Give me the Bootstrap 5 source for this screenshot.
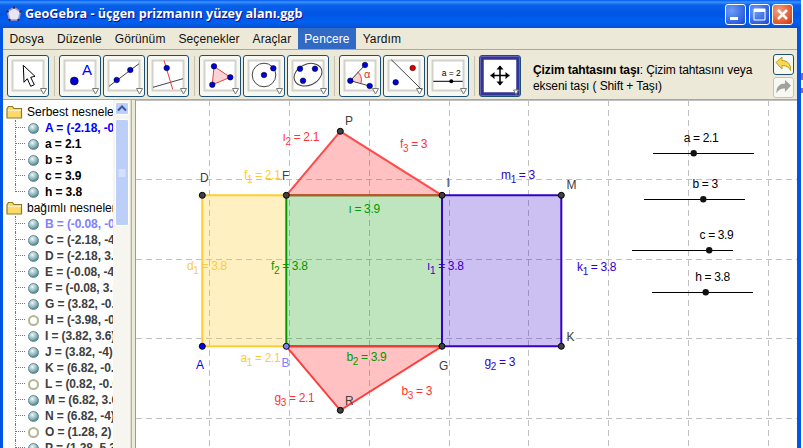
<!DOCTYPE html>
<html lang="tr">
<head>
    <meta charset="UTF-8">
    <meta name="viewport" content="width=device-width, initial-scale=1.0">
    <title>GeoGebra</title>
    <link href="https://cdn.jsdelivr.net/npm/bootstrap@5.3.0/dist/css/bootstrap.min.css" rel="stylesheet">
    <style>
        html, body { margin: 0; height: 448px; overflow: hidden; background: #fff; }
        body { font: 12px/16px "Liberation Sans", Arial, sans-serif; color: #000; }
        .gg-window { width: 803px; height: 448px; }
        .gg-frame { width: 801px; background: #ece9d8; border-left: 3px solid #0055e5; border-right: 4px solid #0055e5; }
        .gg-gutter { width: 2px; background: linear-gradient(#fff 73px, #8a5fc0 73px, #8a5fc0 80px, #fff 80px, #fff 88px, #8a5fc0 88px, #8a5fc0 93px, #fff 93px); }
        .gg-defs { position: absolute; }

        .gg-title { height: 28px; margin: 0 -4px 0 -3px; padding: 0 6px; color: #fff; font: bold 12.6px/1 "Open Sans", sans-serif; text-shadow: 1px 1px 0 #0f1089; background: linear-gradient(#0058ee 0, #3a93ff 2px, #0a62e8 5px, #0055e5 14px, #0060f0 22px, #0a50d0 28px); }
        .gg-title-text { margin-left: 3px; }
        .win-group { gap: 2.5px; margin-right: 2px; }
        .win-btn { width: 21px; height: 21px; border: 1px solid #fff; border-radius: 3px; background: radial-gradient(circle at 30% 30%, #6f9cf5, #2a5ee0 75%, #1c46c4); padding: 0; }
        .win-close { background: radial-gradient(circle at 30% 30%, #f0a080, #e0542c 70%, #c23a14); }

        .gg-menu { height: 22px; border-bottom: 1px solid #aca899; letter-spacing: .1px; }
        .gg-menu span { padding: 0 6.5px; line-height: 22px; height: 21px; color: #111; }
        .gg-menu span.is-open { background: #316ac5; color: #fff; padding: 0 6px; margin: 0 .5px; }

        .gg-tools { height: 50px; padding: 5px 0 0 4px; border-bottom: 1px solid #aca899; }
        .tool-btn { width: 42px; height: 42px; padding: 0; border: 1px solid #1c4f74; border-radius: 3px; background: #f8f8f3; flex: none; margin-right: 2px; }
        .tool-btn svg { display: block; }
        .tool-sep { width: 1px; height: 40px; margin: 1px 4px 0 3px; background: #c9c5b2; flex: none; }
        .tool-help { width: 240px; margin-left: 10px; padding-top: 7px; flex: none; letter-spacing: -.1px; }
        .hist-stack { gap: 2px; margin-top: -1px; }
        .hist-btn { width: 21px; height: 21px; padding: 0; border: 1px solid #1c4f74; border-radius: 3px; background: #f8f8f3; }
        .hist-off { border-color: #c6c5b5; }

        .gg-main { height: 348px; }
        .gg-tree { width: 110px; background: #fff; overflow: hidden; padding-top: 4px; white-space: nowrap; flex: none; }
        .tree-head, .tree-row { height: 16px; }
        .tree-head svg { margin: 0 4px 0 3px; flex: none; }
        .tree-group { margin: 0 0 0 12px; padding: 0; list-style: none; }
        .tree-row { border-left: 1px dotted #777; font-weight: bold; color: #404040; letter-spacing: -.1px; }
        .tree-row.is-last { border-left-color: transparent; }
        .tree-tick { width: 10px; height: 8px; margin-left: -1px; border-bottom: 1px dotted #777; align-self: flex-start; flex: none; }
        .is-last .tree-tick { border-left: 1px dotted #777; }
        .tree-ball { width: 11px; height: 11px; margin: 0 6px 0 3px; border-radius: 50%; flex: none; background: radial-gradient(circle at 38% 30%, #f0f6f6, #8fb8bc 50%, #3f7488 85%); border: 1px solid #5d8794; }
        .tree-ball.is-hollow { background: #fff; border: 2px solid #b4b494; }
        .tree-free { color: #000; }
        .tree-blue { color: #0000ff; }
        .tree-pale { color: #8080ff; }

        .gg-scroll { width: 18px; flex: none; background: #f6f5ef; padding: 2px 1px 0 2px; border-right: 1px solid #e0ddcc; }
        .scroll-up { height: 13px; border: 1px solid #fff; border-radius: 2px; background: #bccff9; }
        .scroll-thumb { height: 107px; margin-top: 4px; border: 1px solid #fff; border-radius: 2px; background: #bccff9; }
        .gg-split { width: 5px; flex: none; background: #ece9d8; border-right: 1px solid #9d9b8e; border-left: 1px solid #b4b2a4; }
        .gg-canvas { display: block; width: 661px; height: 348px; background: #fff; flex: none; }
        .gg-canvas text { font: 12px "Liberation Sans", Arial, sans-serif; letter-spacing: -.35px; }
        .gg-canvas .sb { font-size: 10px; }
        .grid-line { stroke: #c0c0c0; stroke-width: 1; stroke-dasharray: 6 4; }
        .pt { stroke: #000; stroke-width: 1; fill: #404040; }
        .pt-blue { fill: #0000ff; }
        .pt-pale { fill: #8080ff; }
    </style>
</head>
<body>
    <svg width="0" height="0" class="gg-defs">
        <defs>
            <g id="frame"><rect x="4.5" y="4.5" width="31" height="30" fill="#fff" stroke="#d2d2ca" stroke-width="2"/></g>
            <g id="drop"><path d="M32.5 32.5h6l-3 5.5z" fill="#fff" stroke="#777"/></g>
        </defs>
    </svg>

    <div class="gg-window d-flex">
        <div class="gg-frame d-flex flex-column">
            <div class="gg-title d-flex align-items-center">
                <svg width="16" height="16" viewBox="0 0 16 16"><path d="M8 1.5 14.5 5.5 12.5 14 3.5 14 1.500 5.5z" fill="#e6e6f6" stroke="#9a9ac4" stroke-width="1.5"/><g fill="#2a2a70"><circle cx="8" cy="1.5" r="1.3"/><circle cx="14.5" cy="5.5" r="1.3"/><circle cx="12.5" cy="14" r="1.3"/><circle cx="3.5" cy="14" r="1.3"/><circle cx="1.5" cy="5.5" r="1.3"/></g></svg>
                <span class="gg-title-text">GeoGebra - üçgen prizmanın yüzey alanı.ggb</span>
                <div class="win-group d-flex ms-auto">
                    <button class="win-btn d-flex"><svg width="19" height="19"><rect x="4" y="12" width="8" height="3" fill="#fff"/></svg></button>
                    <button class="win-btn d-flex"><svg width="19" height="19"><path d="M4 4h11v11H4z" fill="none" stroke="#fff"/><rect x="4" y="4" width="11" height="3" fill="#fff"/></svg></button>
                    <button class="win-btn win-close d-flex"><svg width="19" height="19"><path d="M5 5l9 9M14 5l-9 9" stroke="#fff" stroke-width="2.5"/></svg></button>
                </div>
            </div>

            <div class="gg-menu d-flex">
                <span>Dosya</span><span>Düzenle</span><span>Görünüm</span><span>Seçenekler</span><span>Araçlar</span><span class="is-open">Pencere</span><span>Yardım</span>
            </div>

            <div class="gg-tools d-flex">
                <button class="tool-btn"><svg width="40" height="40"><use href="#frame"/><use href="#drop"/><path d="M15.3 9.3 16 26.3 19.3 22.7 22.7 30.3 26.3 28.7 22.7 21.3 27 20.3z" fill="#fff" stroke="#000"/></svg></button>
                <div class="tool-sep"></div>
                <button class="tool-btn"><svg width="40" height="40"><use href="#frame"/><use href="#drop"/><circle cx="14.3" cy="25" r="4" fill="#0000d8" stroke="#000" stroke-width=".5"/><text x="22" y="19" fill="#0000ff" font-size="15" font-family="Liberation Sans">A</text></svg></button>
                <button class="tool-btn"><svg width="40" height="40"><use href="#frame"/><use href="#drop"/><path d="M5 30.3 35 7.7" stroke="#444" fill="none"/><circle cx="12.7" cy="24" r="2.8" fill="#0000d8" stroke="#000" stroke-width=".5"/><circle cx="26.3" cy="14" r="2.8" fill="#0000d8" stroke="#000" stroke-width=".5"/></svg></button>
                <button class="tool-btn"><svg width="40" height="40"><use href="#frame"/><use href="#drop"/><path d="M5 31.3 35 22.7" stroke="#444" fill="none"/><path d="M16 4.3 24.7 33.3" stroke="#f03c3c" fill="none"/><circle cx="18.7" cy="12" r="2.8" fill="#0000d8" stroke="#000" stroke-width=".5"/></svg></button>
                <div class="tool-sep"></div>
                <button class="tool-btn"><svg width="40" height="40"><use href="#frame"/><use href="#drop"/><path d="M14 10.3 30.3 21.3 12.3 28.7z" fill="#f8d4d4" stroke="#e84040"/><g fill="#0000d8" stroke="#000" stroke-width=".5"><circle cx="14" cy="10.3" r="2.8"/><circle cx="30.3" cy="21.3" r="2.8"/><circle cx="12.3" cy="28.7" r="2.8"/></g></svg></button>
                <button class="tool-btn"><svg width="40" height="40"><use href="#frame"/><use href="#drop"/><circle cx="20" cy="19" r="11.8" fill="none" stroke="#444"/><g fill="#0000d8" stroke="#000" stroke-width=".5"><circle cx="20" cy="19" r="2.8"/><circle cx="29.3" cy="12.3" r="2.8"/></g></svg></button>
                <button class="tool-btn"><svg width="40" height="40"><use href="#frame"/><use href="#drop"/><ellipse cx="20" cy="18.7" rx="14.5" ry="10.5" transform="rotate(-25 20 18.7)" fill="none" stroke="#444"/><g fill="#0000d8" stroke="#000" stroke-width=".5"><circle cx="12" cy="12.7" r="2.8"/><circle cx="27" cy="12.7" r="2.8"/><circle cx="15" cy="24.7" r="2.8"/></g></svg></button>
                <div class="tool-sep"></div>
                <button class="tool-btn"><svg width="40" height="40"><use href="#frame"/><use href="#drop"/><path d="M10.3 24.7 17.5 15.8A11 11 0 0 1 21 27z" fill="#f8d4d4"/><path d="M17.5 15.8A11 11 0 0 1 21 27" fill="none" stroke="#e84040"/><path d="M25 9 10.3 24.7 29.7 30" fill="none" stroke="#444"/><g fill="#0000d8" stroke="#000" stroke-width=".5"><circle cx="25" cy="9" r="2.8"/><circle cx="10.3" cy="24.7" r="2.8"/><circle cx="29.7" cy="30" r="2.8"/></g><text x="24" y="22" fill="#e03030" font-size="11" font-family="Liberation Sans">α</text></svg></button>
                <button class="tool-btn"><svg width="40" height="40"><use href="#frame"/><use href="#drop"/><path d="M7.3 3.7 37.7 33.7" stroke="#444" fill="none"/><circle cx="28.7" cy="12" r="2.8" fill="#e00000" stroke="#000" stroke-width=".5"/><circle cx="11.7" cy="26.3" r="2.8" fill="#0000d8" stroke="#000" stroke-width=".5"/></svg></button>
                <button class="tool-btn"><svg width="40" height="40"><use href="#frame"/><use href="#drop"/><text x="13.7" y="19.5" font-size="8.5" font-family="Liberation Sans">a = 2</text><path d="M5.3 25.3H34.7" stroke="#000"/><circle cx="23.3" cy="25.3" r="2" fill="#000"/></svg></button>
                <div class="tool-sep"></div>
                <button class="tool-btn"><svg width="40" height="40"><rect x="2" y="2" width="36" height="36" fill="#fff" stroke="#33339a" stroke-width="3.5"/><path d="M33.5 34h5l-2.5 4.5z" fill="#fff" stroke="#777"/><path d="M20 10v19M10.5 19.5h19" stroke="#000" stroke-width="1.5"/><path d="M20 9.5l-3.5 4h7zM20 29.5l-3.5-4h7zM10.5 19.5l4-3.500v7zM29.500 19.500l-4-3.500v7z" fill="#000"/></svg></button>
                <div class="tool-help"><b>Çizim tahtasını taşı</b>: Çizim tahtasını veya<br>ekseni taşı ( Shift + Taşı)</div>
                <div class="hist-stack d-flex flex-column">
                    <button class="hist-btn d-flex"><svg width="19" height="19"><path d="M2 7.5 8 2v3.5c5 0 9 3 8.5 10-1.5-3.5-4-5-8.5-5V14z" fill="#f4d850" stroke="#c0a020"/></svg></button>
                    <button class="hist-btn hist-off d-flex"><svg width="19" height="19"><path d="M17 7.5 11 2v3.5c-5 0-9 3-8.5 10 1.5-3.5 4-5 8.5-5V14z" fill="#a0a0a0"/></svg></button>
                </div>
            </div>

            <div class="gg-main d-flex">
                <div class="gg-tree">
                    <div class="tree-head d-flex align-items-center"><svg width="17" height="14" viewBox="0 0 17 14"><path d="M1 3.5 2.5 1.5h4l1.5 2h7.5v9.5H1z" fill="#fbd96a" stroke="#8f7a22" stroke-width="1.2"/><path d="M2 5.5h13" stroke="#fff2c0"/></svg>Serbest nesneler</div>
                    <ul class="tree-group">
                        <li class="tree-row d-flex align-items-center tree-blue"><span class="tree-tick"></span><span class="tree-ball"></span>A = (-2.18, -0.08)</li>
                        <li class="tree-row d-flex align-items-center tree-free"><span class="tree-tick"></span><span class="tree-ball"></span>a = 2.1</li>
                        <li class="tree-row d-flex align-items-center tree-free"><span class="tree-tick"></span><span class="tree-ball"></span>b = 3</li>
                        <li class="tree-row d-flex align-items-center tree-free"><span class="tree-tick"></span><span class="tree-ball"></span>c = 3.9</li>
                        <li class="tree-row d-flex align-items-center tree-free is-last"><span class="tree-tick"></span><span class="tree-ball"></span>h = 3.8</li>
                    </ul>
                    <div class="tree-head d-flex align-items-center"><svg width="17" height="14" viewBox="0 0 17 14"><path d="M1 3.5 2.5 1.5h4l1.5 2h7.5v9.5H1z" fill="#fbd96a" stroke="#8f7a22" stroke-width="1.2"/><path d="M2 5.5h13" stroke="#fff2c0"/></svg>bağımlı nesneler</div>
                    <ul class="tree-group">
                        <li class="tree-row d-flex align-items-center tree-pale"><span class="tree-tick"></span><span class="tree-ball"></span>B = (-0.08, -0.08)</li>
                        <li class="tree-row d-flex align-items-center"><span class="tree-tick"></span><span class="tree-ball"></span>C = (-2.18, -4)</li>
                        <li class="tree-row d-flex align-items-center"><span class="tree-tick"></span><span class="tree-ball"></span>D = (-2.18, 3.6)</li>
                        <li class="tree-row d-flex align-items-center"><span class="tree-tick"></span><span class="tree-ball"></span>E = (-0.08, -4)</li>
                        <li class="tree-row d-flex align-items-center"><span class="tree-tick"></span><span class="tree-ball"></span>F = (-0.08, 3.6)</li>
                        <li class="tree-row d-flex align-items-center"><span class="tree-tick"></span><span class="tree-ball"></span>G = (3.82, -0.08)</li>
                        <li class="tree-row d-flex align-items-center"><span class="tree-tick"></span><span class="tree-ball is-hollow"></span>H = (-3.98, -0.08)</li>
                        <li class="tree-row d-flex align-items-center"><span class="tree-tick"></span><span class="tree-ball"></span>I = (3.82, 3.6)</li>
                        <li class="tree-row d-flex align-items-center"><span class="tree-tick"></span><span class="tree-ball"></span>J = (3.82, -4)</li>
                        <li class="tree-row d-flex align-items-center"><span class="tree-tick"></span><span class="tree-ball"></span>K = (6.82, -0.08)</li>
                        <li class="tree-row d-flex align-items-center"><span class="tree-tick"></span><span class="tree-ball is-hollow"></span>L = (0.82, -0.08)</li>
                        <li class="tree-row d-flex align-items-center"><span class="tree-tick"></span><span class="tree-ball"></span>M = (6.82, 3.6)</li>
                        <li class="tree-row d-flex align-items-center"><span class="tree-tick"></span><span class="tree-ball"></span>N = (6.82, -4)</li>
                        <li class="tree-row d-flex align-items-center"><span class="tree-tick"></span><span class="tree-ball is-hollow"></span>O = (1.28, 2)</li>
                        <li class="tree-row d-flex align-items-center"><span class="tree-tick"></span><span class="tree-ball"></span>P = (1.28, 5.3)</li>
                    </ul>
                </div>
                <div class="gg-scroll">
                    <div class="scroll-up d-flex align-items-center justify-content-center"><svg width="10" height="7"><path d="M1 5.5 5 1.5 9 5.5" fill="none" stroke="#3d5a9a" stroke-width="2"/></svg></div>
                    <div class="scroll-thumb d-flex align-items-center justify-content-center"><svg width="8" height="8"><path d="M.5 1h7M.5 3h7M.5 5h7M.5 7h7" stroke="#eef3ff"/></svg></div>
                </div>
                <div class="gg-split"></div>

                <svg class="gg-canvas" viewBox="136 100 661 348">
                    <path d="M136 100.5H797" stroke="#c0c0c0"/>
                    <g class="grid-line">
                        <path d="M209.5 100V448M289.5 100V448M369.5 100V448M449.5 100V448M528.5 100V448M608.5 100V448M688.5 100V448M768.5 100V448"/>
                        <path d="M136 179.5H797M136 259.5H797M136 338.5H797M136 418.5H797"/>
                    </g>

                    <rect x="202.3" y="195.3" width="84" height="151" fill="#ffcc33" fill-opacity=".3"/>
                    <rect x="286.3" y="195.3" width="155.7" height="151" fill="#009900" fill-opacity=".25"/>
                    <rect x="442" y="195.3" width="119.3" height="151" fill="#3300cc" fill-opacity=".25"/>
                    <path d="M286.3 195.3 340.3 131.3 442 195.3z" fill="#ff3333" fill-opacity=".3"/>
                    <path d="M286.3 346.3 340.3 410.3 442 346.3z" fill="#ff3333" fill-opacity=".3"/>

                    <g fill="none" stroke-width="2">
                        <path d="M286.3 195.3H202.3V346.3H286.3" stroke="#ffcc33"/>
                        <path d="M286.3 195.3H442M286.3 346.3H442" stroke="#009900"/>
                        <path d="M286.3 195.3V346.3" stroke="#009900"/>
                        <path d="M442 195.3H561.3V346.3H442V195.3" stroke="#3300cc"/>
                        <path d="M286.3 195.3 340.3 131.3 442 195.3z" stroke="#ff3333" stroke-opacity=".85"/>
                        <path d="M286.3 346.3 340.3 410.3 442 346.3z" stroke="#ff3333" stroke-opacity=".95"/>
                    </g>

                    <circle class="pt" cx="202.3" cy="195.3" r="3"/>
                    <circle class="pt" cx="286.3" cy="195.3" r="3"/>
                    <circle class="pt" cx="442" cy="195.3" r="3"/>
                    <circle class="pt" cx="561.3" cy="195.3" r="3"/>
                    <circle class="pt" cx="340.3" cy="131.3" r="3"/>
                    <circle class="pt" cx="340.3" cy="410.3" r="3"/>
                    <circle class="pt" cx="442" cy="346.3" r="3"/>
                    <circle class="pt" cx="561.3" cy="346.3" r="3"/>
                    <circle class="pt pt-blue" cx="202.3" cy="346.3" r="3"/>
                    <circle class="pt pt-pale" cx="286.3" cy="346.3" r="3"/>

                    <g fill="#404040">
                        <text x="200" y="182">D</text>
                        <text x="282" y="180">F</text>
                        <text x="446.5" y="187">I</text>
                        <text x="345" y="125">P</text>
                        <text x="566.5" y="189">M</text>
                        <text x="566.5" y="341">K</text>
                        <text x="439" y="370">G</text>
                        <text x="345" y="405">R</text>
                    </g>
                    <text x="196" y="369" fill="#0000ff">A</text>
                    <text x="281.5" y="367" fill="#8080ff">B</text>

                    <g fill="#ff3333">
                        <text x="282.5" y="141">ı<tspan class="sb" dy="4">2</tspan><tspan dy="-4"> = 2.1</tspan></text>
                        <text x="400" y="148">f<tspan class="sb" dy="4">3</tspan><tspan dy="-4"> = 3</tspan></text>
                        <text x="274.5" y="402">g<tspan class="sb" dy="4">3</tspan><tspan dy="-4"> = 2.1</tspan></text>
                        <text x="401.5" y="395">b<tspan class="sb" dy="4">3</tspan><tspan dy="-4"> = 3</tspan></text>
                    </g>
                    <g fill="#ffcc33">
                        <text x="244" y="179">f<tspan class="sb" dy="4">1</tspan><tspan dy="-4"> = 2.1</tspan></text>
                        <text x="187" y="270">d<tspan class="sb" dy="4">1</tspan><tspan dy="-4"> = 3.8</tspan></text>
                        <text x="240.5" y="362">a<tspan class="sb" dy="4">1</tspan><tspan dy="-4"> = 2.1</tspan></text>
                    </g>
                    <g fill="#009900">
                        <text x="348.5" y="213">ı = 3.9</text>
                        <text x="271" y="270">f<tspan class="sb" dy="4">2</tspan><tspan dy="-4"> = 3.8</tspan></text>
                        <text x="346.5" y="361">b<tspan class="sb" dy="4">2</tspan><tspan dy="-4"> = 3.9</tspan></text>
                    </g>
                    <g fill="#3300cc">
                        <text x="427" y="270">ı<tspan class="sb" dy="4">1</tspan><tspan dy="-4"> = 3.8</tspan></text>
                        <text x="501" y="179">m<tspan class="sb" dy="4">1</tspan><tspan dy="-4"> = 3</tspan></text>
                        <text x="577" y="271">k<tspan class="sb" dy="4">1</tspan><tspan dy="-4"> = 3.8</tspan></text>
                        <text x="484.5" y="366">g<tspan class="sb" dy="4">2</tspan><tspan dy="-4"> = 3</tspan></text>
                    </g>

                    <path d="M653 153.5H754M644 199.5H745M632 250.5H733M652 292.5H753" stroke="#000"/>
                    <g fill="#111">
                        <circle cx="693.7" cy="153.3" r="3.2"/>
                        <circle cx="703.3" cy="199.3" r="3.2"/>
                        <circle cx="709.2" cy="250.3" r="3.2"/>
                        <circle cx="705.7" cy="292.3" r="3.2"/>
                    </g>
                    <text x="683.7" y="142">a = 2.1</text>
                    <text x="692.5" y="188">b = 3</text>
                    <text x="699.5" y="239">c = 3.9</text>
                    <text x="695.3" y="281">h = 3.8</text>
                </svg>
            </div>
        </div>
        <div class="gg-gutter"></div>
    </div>
</body>
</html>
